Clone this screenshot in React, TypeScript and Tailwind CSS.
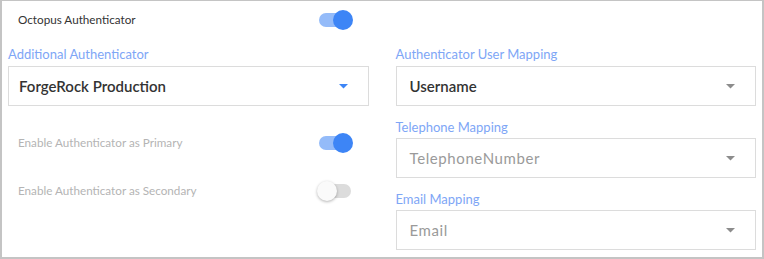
import React from "react";

const font = { fontFamily: "Lato, 'Noto Sans', sans-serif" };

function Toggle({ on }: { on: boolean }) {
  return (
    <div className="relative w-[34px] h-[20px] flex items-center">
      <div className={`w-[32px] h-[14px] rounded-full ${on ? "bg-[#94bbf9]" : "bg-[#dcdcdc]"}`} />
      <div
        className={`absolute top-0 w-[20px] h-[20px] rounded-full ${
          on ? "right-0 bg-[#3d85f6]" : "left-[-2px] bg-[#fafafa] shadow-[0_1px_3px_rgba(0,0,0,0.3)]"
        }`}
      />
    </div>
  );
}

function Caret({ blue }: { blue?: boolean }) {
  return (
    <svg width="9" height="5" viewBox="0 0 9 5">
      <path d="M0 0 L9 0 L4.5 4.5 Z" fill={blue ? "#3d85f6" : "#8c8c8c"} />
    </svg>
  );
}

function Select({ value, big, blue, pl }: { value: string; big?: boolean; blue?: boolean; pl: string }) {
  return (
    <div className={`h-[40px] border border-[#dcdcdc] flex items-center justify-between ${pl} pr-[20px]`}>
      <span className={big ? "text-[15px] font-semibold text-[#333]" : "text-[15px] tracking-[0.6px] text-[#9a9a9a]"}>
        {value}
      </span>
      <Caret blue={blue} />
    </div>
  );
}

function Label({ children, className = "" }: { children: React.ReactNode; className?: string }) {
  return <div className={`text-[13px] leading-[16px] text-[#7ea6f6] ${className}`}>{children}</div>;
}

export default function App() {
  return (
    <div style={font} className="w-[764px] h-[259px] bg-white border-t border-l-2 border-r-2 border-b-2 border-[#c4c4c4] px-[6px]">
      <div className="grid grid-cols-2 gap-[27px]">
        <div className="flex flex-col">
          <div className="h-[37px] flex items-center justify-between pl-[10px] pr-[16px]">
            <span className="text-[11.7px] text-[#333]">Octopus Authenticator</span>
            <Toggle on />
          </div>
          <Label className="mt-[8px] mb-[4px]">Additional Authenticator</Label>
          <Select value="ForgeRock Production" big blue pl="pl-[10px]" />
          <div className="mt-[13px] h-[48px] flex items-center justify-between pl-[10px] pr-[16px]">
            <span className="text-[11.7px] text-[#b4b4b4]">Enable Authenticator as Primary</span>
            <Toggle on />
          </div>
          <div className="h-[48px] flex items-center justify-between pl-[10px] pr-[16px]">
            <span className="text-[11.7px] text-[#b4b4b4]">Enable Authenticator as Secondary</span>
            <Toggle on={false} />
          </div>
        </div>
        <div className="flex flex-col pt-[37px]">
          <Label className="mt-[8px] mb-[4px]">Authenticator User Mapping</Label>
          <Select value="Username" big pl="pl-[13px]" />
          <Label className="mt-[13px] mb-[3px]">Telephone Mapping</Label>
          <Select value="TelephoneNumber" pl="pl-[13px]" />
          <Label className="mt-[13px] mb-[3px]">Email Mapping</Label>
          <Select value="Email" pl="pl-[13px]" />
        </div>
      </div>
    </div>
  );
}
